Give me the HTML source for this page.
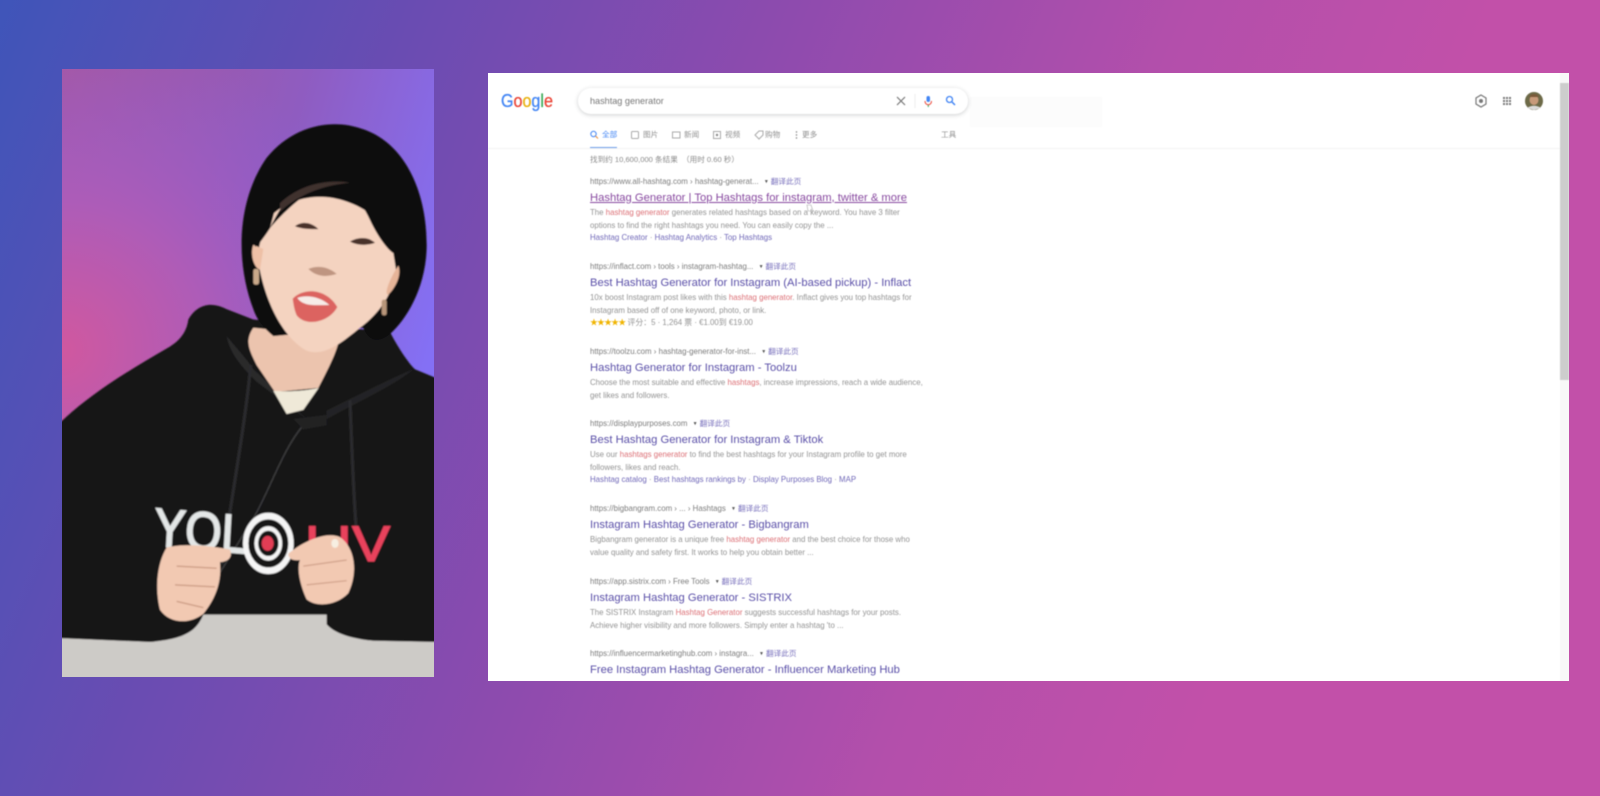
<!DOCTYPE html>
<html><head><meta charset="utf-8">
<style>
html,body{margin:0;padding:0;width:1600px;height:796px;overflow:hidden}
body{position:relative;background:linear-gradient(112deg,#3f55b9 0%,#6a4cb2 22%,#8f4bae 42%,#b34fab 62%,#c250a9 78%,#c250a9 100%);font-family:"Liberation Sans","Noto Sans CJK SC",sans-serif}
#photo{position:absolute;left:0;top:0;width:1600px;height:796px}
#panel{position:absolute;left:488px;top:73px;width:1081px;height:608px;background:#fff;overflow:hidden}
#in{position:absolute;left:-488px;top:-73px;width:1600px;height:796px;filter:blur(.55px)}
.t{position:absolute;left:590px;line-height:12px;height:12px;white-space:nowrap}
.u{font-size:7.87px;color:#7c7c7c;margin-top:.5px}
.u b{font-weight:400;color:#7870bc;margin-left:1px;font-size:7.65px}
.u i{font-style:normal;font-size:5px;color:#555;margin:0 1px 0 3px;vertical-align:1px}
.h{font-size:11.22px;color:#5a4fa8;margin-top:.7px}
.b{font-size:7.86px;color:#939393;margin-top:.5px}
.b em{font-style:normal;color:#dc7076}
.l{font-size:7.87px;color:#7068b8}
.l s{text-decoration:none;color:#999}
.tab{position:absolute;font-size:7.6px;line-height:12px;color:#909090;top:129px;white-space:nowrap}
</style></head><body>
<svg id="photo" viewBox="0 0 1600 796">
<defs>
<radialGradient id="pk" gradientUnits="userSpaceOnUse" cx="62" cy="350" r="330"><stop offset="0" stop-color="#d0589f"/><stop offset=".45" stop-color="#ad5cb8"/><stop offset="1" stop-color="#9060d8" stop-opacity="0"/></radialGradient>
<linearGradient id="pbg" x1="0" y1="0" x2="1" y2=".45"><stop offset="0" stop-color="#a8569a"/><stop offset=".55" stop-color="#8f5cc0"/><stop offset="1" stop-color="#8470f5"/></linearGradient>
<filter id="bl" x="-5%" y="-5%" width="110%" height="110%"><feGaussianBlur stdDeviation=".9"/></filter>
</defs>
<rect x="62" y="69" width="372" height="608" fill="url(#pbg)"/>
<rect x="62" y="69" width="372" height="608" fill="url(#pk)"/>
<clipPath id="cp"><rect x="62" y="69" width="372" height="608"/></clipPath>
<g clip-path="url(#cp)"><g filter="url(#bl)"><g transform="translate(40,50) scale(.33333,.4146)" >
<!-- table -->
<rect x="40" y="1340" width="1160" height="190" fill="#cdcbc7"/>
<!-- hoodie -->
<path d="M40,915 C130,840 250,780 390,715 C420,700 440,680 445,650 C470,615 510,605 560,625 L640,650 L1050,680 C1075,720 1110,760 1125,770 L1200,795 L1200,1428 L1000,1425 C930,1420 880,1405 860,1385 L860,1362 L490,1362 C470,1400 440,1420 330,1428 L40,1418 Z" fill="#141416"/>
<path d="M560,690 C590,720 620,745 640,770 L800,890 L650,800 C600,760 570,730 560,690Z" fill="#2a2a2c"/>
<path d="M860,890 C950,850 1060,810 1120,770 C1060,790 960,830 860,870Z" fill="#242426"/>
<!-- neck + undershirt -->
<path d="M640,670 C615,700 625,720 650,760 L705,825 L835,815 C870,760 890,730 900,690 Z" fill="#ecc4ae"/>
<path d="M700,822 C745,825 800,822 836,815 L790,868 L740,878 Z" fill="#efe9d8"/>
<!-- hair back -->
<path d="M640,625 C590,520 585,370 680,260 C760,180 880,165 965,190 C1085,220 1160,330 1160,470 C1160,570 1100,650 1050,685 C1010,710 985,700 970,670 L700,690 C670,670 650,650 640,625Z" fill="#0e0e11"/>
<!-- face -->
<path d="M700,395 C675,430 650,470 655,510 C670,590 720,690 800,725 C850,740 900,710 960,670 C1010,640 1050,600 1070,540 L1060,490 L1000,400 C900,340 780,340 700,395Z" fill="#f4d3c0"/>
<path d="M640,470 C630,490 640,525 660,530 L670,480 Z" fill="#eec0a6"/>
<path d="M1075,520 C1050,550 1030,590 1045,590 C1070,570 1085,540 1075,520Z" fill="#e6b498"/>
<!-- fringe -->
<path d="M870,255 C800,290 730,360 690,430 C730,390 790,350 840,325 C890,310 950,340 990,410 C1010,445 1040,480 1060,490 L1100,340 L960,230 Z" fill="#0e0e11"/>
<path d="M690,430 C670,455 655,470 645,475 L640,400 L720,340Z" fill="#0e0e11"/>
<path d="M720,370 C770,330 850,310 930,320 C860,325 780,345 720,390Z" fill="#8a6a5a" opacity=".4"/>
<!-- eyes/nose -->
<path d="M765,425 C785,412 815,415 835,432 C810,432 785,432 765,425Z" fill="#4a302a"/>
<path d="M930,462 C955,450 985,450 1005,465 C985,472 950,472 930,462Z" fill="#4a302a"/>
<path d="M805,528 C830,548 860,548 890,540 C860,520 830,520 805,528Z" fill="#a87a66" opacity=".7"/>
<!-- mouth -->
<path d="M758,600 C790,572 860,575 892,620 C870,655 800,670 770,640 C762,625 760,610 758,600Z" fill="#dc6460"/>
<path d="M772,598 C800,590 840,595 868,615 C830,615 790,620 772,598Z" fill="#f7ece8"/>
<!-- earrings -->
<rect x="640" y="528" width="17" height="38" rx="6" fill="#c9a98a"/>
<rect x="1025" y="602" width="15" height="38" rx="6" fill="#b8967a"/>
<!-- strings -->
<path d="M632,760 C620,870 590,1010 545,1240" stroke="#2c2c2e" stroke-width="9" fill="none"/>
<path d="M930,845 C935,950 940,1070 950,1170" stroke="#2c2c2e" stroke-width="9" fill="none"/>
<path d="M790,905 C730,960 690,1060 640,1130 L540,1260" stroke="#3c3c3e" stroke-width="4" fill="none"/>
<path d="M760,890 L860,880 L860,905 L790,915Z" fill="#222224"/>
<!-- logo -->
<text x="340" y="1195" font-size="130" stroke="#e3e6e6" stroke-width="4" fill="#e3e6e6" font-family="Liberation Sans,sans-serif" textLength="280" lengthAdjust="spacingAndGlyphs" transform="rotate(4 340 1195)">YOL</text>
<ellipse cx="685" cy="1190" rx="68" ry="66" fill="#141416" stroke="#f5f5f5" stroke-width="16"/>
<ellipse cx="685" cy="1190" rx="36" ry="36" fill="none" stroke="#f5f5f5" stroke-width="11"/>
<circle cx="683" cy="1190" r="18" fill="#e23d55"/>
<text x="795" y="1232" font-size="120" stroke="#e8425c" stroke-width="3" fill="#e8425c" font-family="Liberation Sans,sans-serif" textLength="255" lengthAdjust="spacingAndGlyphs">LIV</text>
<!-- hands -->
<path d="M380,1200 C430,1190 510,1195 570,1205 C580,1225 560,1235 540,1235 C545,1280 530,1320 490,1360 C450,1385 390,1385 360,1350 C345,1300 350,1240 380,1200Z" fill="#f2c9b2"/>
<path d="M745,1215 C790,1185 860,1160 900,1175 C945,1200 955,1260 925,1310 C890,1340 830,1345 800,1325 C780,1290 770,1250 780,1230 C765,1232 745,1230 745,1215Z" fill="#f2c9b2"/>
<path d="M410,1245 L530,1250 M405,1290 L525,1295 M410,1330 L490,1345" stroke="#c99880" stroke-width="3"/>
<path d="M790,1245 L920,1230 M800,1290 L920,1280" stroke="#cf9f88" stroke-width="3"/>
<circle cx="885" cy="1190" r="11" fill="#f7efe2"/>
</g></g></g>
</svg>
<div id="panel"><div id="in">
<!-- faint -->
<div style="position:absolute;left:970px;top:97px;width:132px;height:30px;background:#fcfcfc"></div>
<!-- logo -->
<div style="position:absolute;left:501px;top:90px;font-size:18.5px;line-height:22px;transform:scaleX(.87);transform-origin:0 0;white-space:nowrap;-webkit-text-stroke:.3px"><span style="color:#4285f4">G</span><span style="color:#ea4335">o</span><span style="color:#e8b00c">o</span><span style="color:#4285f4">g</span><span style="color:#34a853">l</span><span style="color:#ea4335">e</span></div>
<!-- search -->
<div style="position:absolute;left:578px;top:88px;width:390px;height:26px;border-radius:13px;background:#fff;box-shadow:0 1px 4px rgba(60,64,67,.25)"></div>
<div class="t" style="top:95px;font-size:9.1px;color:#777">hashtag generator</div>
<svg style="position:absolute;left:0;top:0" width="1600" height="796">
<path d="M897,97 L905,105 M905,97 L897,105" stroke="#777" stroke-width="1.2"/>
<path d="M915,94 V108" stroke="#eee"/>
<rect x="926.500" y="96" width="3.500" height="6" rx="1.700" fill="#4285f4"/>
<path d="M925,101 C925,106 931.500,106 931.500,101" stroke="#ea4335" fill="none"/><path d="M928.300,105 V107" stroke="#34a853"/>
<circle cx="949.500" cy="99.500" r="3" stroke="#4285f4" stroke-width="1.300" fill="none"/><path d="M952,102 L955,105" stroke="#4285f4" stroke-width="1.500"/>
<!-- tabs icons -->
<circle cx="593.500" cy="134" r="2.700" stroke="#4285f4" stroke-width="1" fill="none"/><path d="M595.500,136 L598,138.500" stroke="#ea8a35"/>
<rect x="631.500" y="131.500" width="7" height="7" rx="1" fill="none" stroke="#aaa"/>
<rect x="672.500" y="132" width="7.500" height="6" fill="none" stroke="#aaa"/>
<rect x="713.500" y="131.500" width="7" height="7" fill="none" stroke="#aaa"/><circle cx="717" cy="135" r="1.200" fill="#888"/>
<path d="M755,135 L759,131 H763 V135 L759,139Z" fill="none" stroke="#aaa"/>
<circle cx="796.500" cy="132" r=".7" fill="#777"/><circle cx="796.500" cy="135" r=".7" fill="#777"/><circle cx="796.500" cy="138" r=".7" fill="#777"/>
<path d="M590,148 H617" stroke="#6f9ee8" stroke-width="2"/>
<path d="M488,148.500 H1560" stroke="#f4f4f4"/>
<!-- right icons -->
<path d="M1481,95 L1486,98 V104 L1481,107 L1476,104 V98Z" fill="none" stroke="#777" stroke-width="1.200"/><circle cx="1481" cy="101" r="2" fill="#777"/>
<g fill="#777"><rect x="1503" y="97" width="2" height="2"/><rect x="1506" y="97" width="2" height="2"/><rect x="1509" y="97" width="2" height="2"/><rect x="1503" y="100" width="2" height="2"/><rect x="1506" y="100" width="2" height="2"/><rect x="1509" y="100" width="2" height="2"/><rect x="1503" y="103" width="2" height="2"/><rect x="1506" y="103" width="2" height="2"/><rect x="1509" y="103" width="2" height="2"/></g>
<circle cx="1534" cy="101" r="9" fill="#6d6a48"/><ellipse cx="1534" cy="100" rx="4.500" ry="5" fill="#c79a7a"/><path d="M1529,97 C1531,93 1537,93 1539,97 Z" fill="#7a5a3a"/><path d="M1527,108 C1531,105 1537,105 1541,108 L1534,110Z" fill="#dcdcdc"/>
<!-- cursor -->
<path d="M807,205 H811 L813,211 H808Z" fill="#fff" stroke="#aaa" stroke-width=".6"/>
</svg>
<div class="tab" style="left:602px;color:#4285f4">全部</div><div class="tab" style="left:643px">图片</div><div class="tab" style="left:684px">新闻</div><div class="tab" style="left:725px">视频</div><div class="tab" style="left:765px">购物</div><div class="tab" style="left:802px">更多</div><div class="tab" style="left:941px">工具</div>
<div class="t b" style="top:153.500px;font-size:7.6px;color:#8a8a8a">找到约 10,600,000 条结果 &nbsp;（用时 0.60 秒）</div>

<div class="t u" style="top:175px">https://www.all-hashtag.com › hashtag-generat... <i>▼</i><b>翻译此页</b></div>
<div class="t h" style="top:191px;color:#87489f;text-decoration:underline">Hashtag Generator | Top Hashtags for instagram, twitter &amp; more</div>
<div class="t b" style="top:206.500px">The <em>hashtag generator</em> generates related hashtags based on a keyword. You have 3 filter</div>
<div class="t b" style="top:219px">options to find the right hashtags you need. You can easily copy the ...</div>
<div class="t l" style="top:231.500px">Hashtag Creator <s>·</s> Hashtag Analytics <s>·</s> Top Hashtags</div>

<div class="t u" style="top:260px">https://inflact.com › tools › instagram-hashtag... <i>▼</i><b>翻译此页</b></div>
<div class="t h" style="top:276px">Best Hashtag Generator for Instagram (AI-based pickup) - Inflact</div>
<div class="t b" style="top:291px">10x boost Instagram post likes with this <em>hashtag generator</em>. Inflact gives you top hashtags for</div>
<div class="t b" style="top:304px">Instagram based off of one keyword, photo, or link.</div>
<div class="t b" style="top:316px"><span style="color:#f0b400;letter-spacing:-.8px">★★★★★</span> 评分：5 · 1,264 票 · €1.00到 €19.00</div>

<div class="t u" style="top:345px">https://toolzu.com › hashtag-generator-for-inst... <i>▼</i><b>翻译此页</b></div>
<div class="t h" style="top:361px">Hashtag Generator for Instagram - Toolzu</div>
<div class="t b" style="top:376px">Choose the most suitable and effective <em>hashtags</em>, increase impressions, reach a wide audience,</div>
<div class="t b" style="top:389px">get likes and followers.</div>

<div class="t u" style="top:417px">https://displaypurposes.com <i>▼</i><b>翻译此页</b></div>
<div class="t h" style="top:433.500px">Best Hashtag Generator for Instagram &amp; Tiktok</div>
<div class="t b" style="top:448.500px">Use our <em>hashtags generator</em> to find the best hashtags for your Instagram profile to get more</div>
<div class="t b" style="top:461px">followers, likes and reach.</div>
<div class="t l" style="top:474px">Hashtag catalog <s>·</s> Best hashtags rankings by <s>·</s> Display Purposes Blog <s>·</s> MAP</div>

<div class="t u" style="top:502px">https://bigbangram.com › ... › Hashtags <i>▼</i><b>翻译此页</b></div>
<div class="t h" style="top:518.500px">Instagram Hashtag Generator - Bigbangram</div>
<div class="t b" style="top:533.500px">Bigbangram generator is a unique free <em>hashtag generator</em> and the best choice for those who</div>
<div class="t b" style="top:546px">value quality and safety first. It works to help you obtain better ...</div>

<div class="t u" style="top:575px">https://app.sistrix.com › Free Tools <i>▼</i><b>翻译此页</b></div>
<div class="t h" style="top:591px">Instagram Hashtag Generator - SISTRIX</div>
<div class="t b" style="top:606px">The SISTRIX Instagram <em>Hashtag Generator</em> suggests successful hashtags for your posts.</div>
<div class="t b" style="top:619px">Achieve higher visibility and more followers. Simply enter a hashtag 'to ...</div>

<div class="t u" style="top:647.500px">https://influencermarketinghub.com › instagra... <i>▼</i><b>翻译此页</b></div>
<div class="t h" style="top:663.500px">Free Instagram Hashtag Generator - Influencer Marketing Hub</div>
<!-- scrollbar -->
<div style="position:absolute;left:1560px;top:73px;width:9px;height:608px;background:#f8f8f8"></div>
<div style="position:absolute;left:1560px;top:83px;width:9px;height:297px;background:#cdcdcd"></div>
</div></div>
</body></html>
